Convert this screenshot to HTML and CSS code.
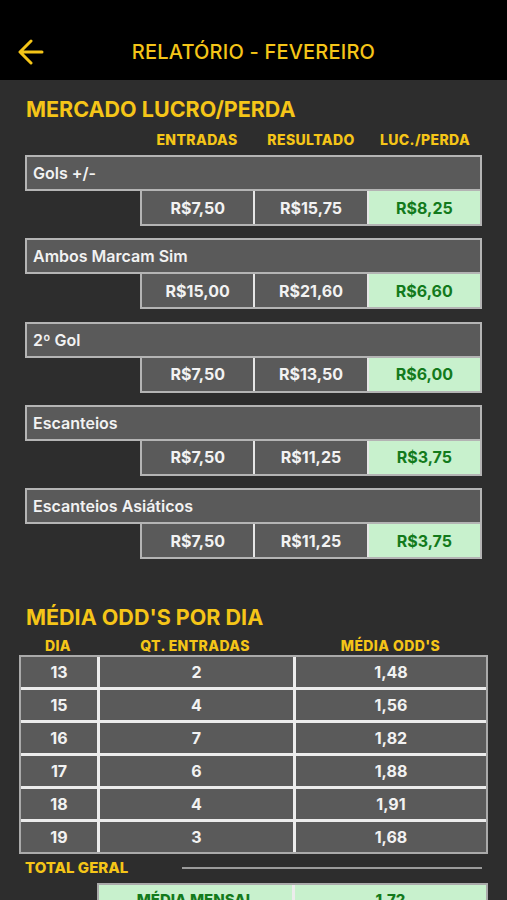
FILE: index.html
```html
<!DOCTYPE html>
<html lang="pt-BR">
<head>
    <meta charset="UTF-8">
    <meta name="viewport" content="width=device-width, initial-scale=1.0">
    <title>Relatório - Fevereiro</title>
    <link rel="stylesheet" href="styles.css">
</head>
<body>
    <header class="topbar">
        <span class="back">
            <svg width="26" height="26" viewBox="0 0 26 26">
                <path d="M24 13H3M13 2L2 13L13 24" fill="none" stroke="#f5c518" stroke-width="3" stroke-linecap="round" stroke-linejoin="round"/>
            </svg>
        </span>
        <h1>RELATÓRIO - FEVEREIRO</h1>
    </header>

    <main class="content">
        <section class="market">
            <h2>MERCADO LUCRO/PERDA</h2>
            <div class="market-head">
                <span>ENTRADAS</span>
                <span>RESULTADO</span>
                <span>LUC./PERDA</span>
            </div>

            <div class="market-list">
                <div class="market-item">
                    <div class="market-name">Gols +/-</div>
                    <div class="market-values">
                        <span>R$7,50</span>
                        <span>R$15,75</span>
                        <span class="profit">R$8,25</span>
                    </div>
                </div>
                <div class="market-item">
                    <div class="market-name">Ambos Marcam Sim</div>
                    <div class="market-values">
                        <span>R$15,00</span>
                        <span>R$21,60</span>
                        <span class="profit">R$6,60</span>
                    </div>
                </div>
                <div class="market-item">
                    <div class="market-name">2º Gol</div>
                    <div class="market-values">
                        <span>R$7,50</span>
                        <span>R$13,50</span>
                        <span class="profit">R$6,00</span>
                    </div>
                </div>
                <div class="market-item">
                    <div class="market-name">Escanteios</div>
                    <div class="market-values">
                        <span>R$7,50</span>
                        <span>R$11,25</span>
                        <span class="profit">R$3,75</span>
                    </div>
                </div>
                <div class="market-item">
                    <div class="market-name">Escanteios Asiáticos</div>
                    <div class="market-values">
                        <span>R$7,50</span>
                        <span>R$11,25</span>
                        <span class="profit">R$3,75</span>
                    </div>
                </div>
            </div>
        </section>

        <section class="odds">
            <h2>MÉDIA ODD'S POR DIA</h2>
            <div class="odds-head">
                <span>DIA</span>
                <span>QT. ENTRADAS</span>
                <span>MÉDIA ODD'S</span>
            </div>
            <div class="odds-table">
                <span>13</span><span>2</span><span>1,48</span>
                <span>15</span><span>4</span><span>1,56</span>
                <span>16</span><span>7</span><span>1,82</span>
                <span>17</span><span>6</span><span>1,88</span>
                <span>18</span><span>4</span><span>1,91</span>
                <span>19</span><span>3</span><span>1,68</span>
            </div>

            <div class="total">
                <span class="total-label">TOTAL GERAL</span>
                <span class="total-line"></span>
            </div>
            <div class="total-row">
                <span>MÉDIA MENSAL</span>
                <span>1,72</span>
            </div>
        </section>
    </main>
</body>
</html>
```

FILE: styles.css
```css
* {
    box-sizing: border-box;
}
body {
    margin: 0;
    background-color: #2d2d2d;
    font-family: Inter, "Liberation Sans", Arial, sans-serif;
    color: #f2f2f2;
    overflow: hidden;
}
.topbar {
    height: 80px;
    background-color: #000;
    display: flex;
    align-items: center;
    justify-content: center;
    padding-top: 24px;
    position: relative;
}
.back {
    position: absolute;
    left: 18px;
    top: 39px;
    display: flex;
}
.topbar h1 {
    margin: 0;
    font-size: 20px;
    font-weight: 500;
    color: #f5c518;
    letter-spacing: 0.2px;
}
.content {
    padding: 0 19px;
}
h2 {
    margin: 0;
    font-size: 21.5px;
    line-height: 28px;
    font-weight: 700;
    color: #f5c518;
    padding-left: 7px;
}
.market {
    padding: 0 6px;
    margin-top: 15px;
}
.market h2 {
    padding-left: 1px;
}
.market-head {
    display: grid;
    grid-template-columns: repeat(3, 114px);
    margin: 8px 0 6px 115px;
    line-height: 18px;
}
.market-head span,
.odds-head span {
    text-align: center;
    font-size: 14px;
    font-weight: 800;
    letter-spacing: 0.4px;
    color: #f5c518;
}
.market-list {
    display: flex;
    flex-direction: column;
    gap: 12.3px;
}
.market-name {
    height: 36px;
    background-color: #5a5a5a;
    border: 2px solid #b4b4b4;
    padding: 0 6px;
    display: flex;
    align-items: center;
    font-size: 16px;
    font-weight: 600;
}
.market-values {
    display: grid;
    grid-template-columns: repeat(3, 1fr);
    gap: 2px;
    margin-left: 115px;
    height: 35px;
    background-color: #e6e6e6;
    border: 2px solid #b4b4b4;
    border-top: none;
}
.market-values span {
    background-color: #5a5a5a;
    display: flex;
    align-items: center;
    justify-content: center;
    font-size: 16px;
    font-weight: 700;
}
.market-values .profit {
    background-color: #c8f1cd;
    color: #137a1c;
}
.odds {
    margin-top: 44px;
}
.odds-head {
    display: grid;
    grid-template-columns: 78px 196px 1fr;
    margin-top: 6px;
    line-height: 18px;
}
.odds-table {
    display: grid;
    grid-template-columns: 76px 193px 1fr;
    grid-auto-rows: 30px;
    gap: 3px;
    background-color: #ececec;
    border: 2px solid #aaaaaa;
}
.odds-table span {
    background-color: #5a5a5a;
    display: flex;
    align-items: center;
    justify-content: center;
    font-size: 16px;
    font-weight: 700;
}
.total {
    display: flex;
    align-items: center;
    margin: 5px 6px 0 6px;
    line-height: 18px;
}
.total-label {
    font-size: 15px;
    font-weight: 800;
    color: #f5c518;
    width: 157px;
}
.total-line {
    flex: 1;
    border-top: 2px solid #9a9a9a;
}
.total-row {
    display: grid;
    grid-template-columns: 193px 1fr;
    gap: 3px;
    margin: 6px 0 0 78px;
    height: 33px;
    background-color: #ececec;
    border: 2px solid #aaaaaa;
}
.total-row span {
    background-color: #c8f1cd;
    color: #137a1c;
    display: flex;
    align-items: center;
    justify-content: center;
    font-size: 15px;
    font-weight: 800;
}
```
